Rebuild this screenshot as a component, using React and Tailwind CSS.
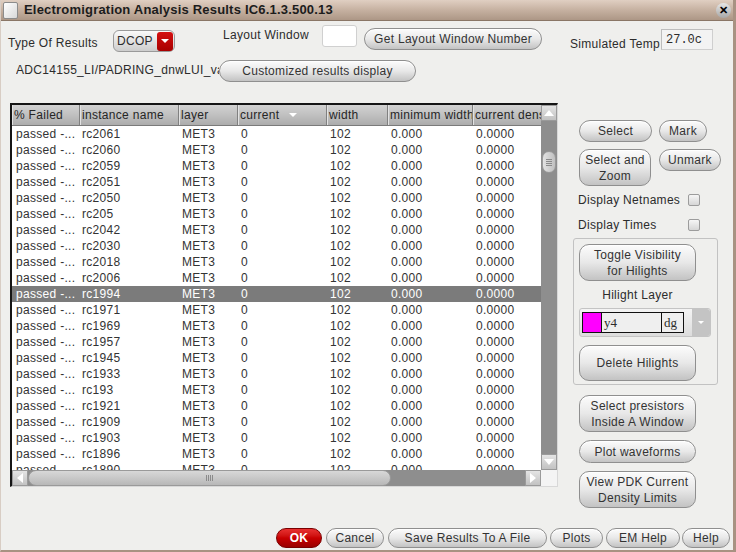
import React from 'react'

const rows = [
  'rc2061', 'rc2060', 'rc2059', 'rc2051', 'rc2050', 'rc205', 'rc2042', 'rc2030', 'rc2018', 'rc2006', 'rc1994',
  'rc1971', 'rc1969', 'rc1957', 'rc1945', 'rc1933', 'rc193', 'rc1921', 'rc1909', 'rc1903', 'rc1896', 'rc1890',
]

const headCell = 'flex h-full items-center overflow-hidden whitespace-nowrap border-r border-r-[#808080] shadow-[inset_1px_0_0_#e2e2e2] pl-[2px]'

function Pill({ className = '', children }) {
  return (
    <div
      className={`flex shrink-0 items-center justify-center border border-[#8f8f8f] bg-linear-to-b from-[#fcfcfc] via-[#e8e8e8] to-[#c3c3c3] text-center leading-[16px] text-[#333] shadow-[inset_0_1px_0_#ffffff] ${className}`}
    >
      {children}
    </div>
  )
}

function Check() {
  return <div className="h-[12px] w-[12px] rounded-[2px] border border-[#9c9c9c] bg-linear-to-b from-[#f6f6f6] to-[#d6d6d6]" />
}

function Arrow({ dir }) {
  const tri =
    dir === 'up'
      ? 'border-x-[5px] border-b-[6px] border-x-transparent border-b-white'
      : dir === 'down'
        ? 'border-x-[5px] border-t-[6px] border-x-transparent border-t-white'
        : dir === 'left'
          ? 'border-y-[5px] border-r-[6px] border-y-transparent border-r-white'
          : 'border-y-[5px] border-l-[6px] border-y-transparent border-l-white'
  return (
    <div className="flex h-[16px] w-[16px] shrink-0 items-center justify-center border border-[#9a9a9a] bg-linear-to-b from-[#e4e4e4] to-[#c2c2c2]">
      <div className={`h-0 w-0 ${tri}`} />
    </div>
  )
}

export default function App() {
  return (
    <div className="flex h-[552px] w-[736px] flex-col overflow-hidden border-b-2 border-l border-r-[3px] border-b-[#a89282] border-l-[#d8cdc4] border-r-[#a89282] bg-[#efefed] font-['Liberation_Sans',Arial,sans-serif] text-[12px] tracking-[0.3px] text-[#2c2c2c]">
      {/* title bar */}
      <div className="flex h-[21px] shrink-0 items-center border-b border-[#8a7666] bg-linear-to-b from-[#e0cfc2] via-[#c6b1a1] to-[#ad9786]">
        <div className="ml-[2px] h-[17px] w-[15px] rounded-[2px] border border-[#8c8c8c] bg-linear-to-br from-white to-[#d8d8d8]" />
        <div className="ml-[6px] text-[13px] font-bold tracking-[0.2px] text-[#1c1c1c]">Electromigration Analysis Results IC6.1.3.500.13</div>
        <div className="ml-auto mr-[2px] flex h-[15px] w-[15px] items-center justify-center rounded-full bg-linear-to-b from-[#e6e6e6] to-[#a8a8a8] text-[11px] font-bold leading-none text-black">
          ✕
        </div>
      </div>

      <div className="flex flex-1 flex-col">
        {/* row 1 */}
        <div className="flex h-[36px] shrink-0 items-start">
          <div className="ml-[7px] mt-[14px] w-[105px] leading-[16px]">Type Of Results</div>
          <div className="mt-[9px] flex h-[22px] w-[62px] items-center rounded-[6px] border border-[#9a9a9a] bg-linear-to-b from-[#fafafa] to-[#cdcdcd] pl-[3px]">
            <span className="flex-1">DCOP</span>
            <div className="mr-[1px] flex h-[19px] w-[16px] items-center justify-center rounded-[3px] bg-linear-to-b from-[#d41010] to-[#a80000]">
              <div className="h-0 w-0 border-x-[4px] border-t-[4px] border-x-transparent border-t-white" />
            </div>
          </div>
          <div className="ml-[48px] mt-[6px] w-[99px] leading-[16px]">Layout Window</div>
          <div className="mt-[4px] h-[22px] w-[35px] rounded-[3px] border border-[#d0d0d0] bg-white" />
          <Pill className="ml-[7px] mt-[7px] h-[22px] w-[178px] rounded-full">Get Layout Window Number</Pill>
          <div className="ml-[28px] mt-[15px] w-[91px] leading-[16px]">Simulated Temp</div>
          <div className="mt-[8px] flex h-[21px] w-[52px] items-center border border-[#cfcfcf] border-l-[#bdbdbd] border-t-[#bdbdbd] bg-[#f3f3f3] pl-[4px] font-['Liberation_Mono',monospace] text-[12px] tracking-normal">
            27.0c
          </div>
        </div>

        {/* row 2 */}
        <div className="flex h-[28px] shrink-0 items-start">
          <div className="ml-[15px] mt-[5px] w-[203px] overflow-hidden whitespace-nowrap leading-[16px]">ADC14155_LI/PADRING_dnwLUI_va</div>
          <Pill className="mt-[3px] h-[22px] w-[197px] rounded-full">Customized results display</Pill>
        </div>

        {/* main */}
        <div className="mt-[18px] flex shrink-0 items-start">
          {/* table */}
          <div className="ml-[9px] flex h-[384px] w-[548px] flex-col border-b border-l-2 border-r border-t-2 border-b-[#d8d8d8] border-l-[#151515] border-r-[#d8d8d8] border-t-[#151515] bg-white">
            <div className="flex h-[365px]">
              <div className="flex w-[529px] flex-col">
                <div className="flex h-[21px] shrink-0 border-b border-[#7a7a7a] bg-linear-to-b from-[#d2d2d2] via-[#c0c0c0] to-[#acacac] text-[#262626]">
                  <div className={`${headCell} w-[68px]`}>% Failed</div>
                  <div className={`${headCell} w-[99px]`}>instance name</div>
                  <div className={`${headCell} w-[59px]`}>layer</div>
                  <div className={`${headCell} w-[89px]`}>
                    current
                    <div className="ml-[10px] h-0 w-0 border-x-[4px] border-t-[4px] border-x-transparent border-t-white" />
                  </div>
                  <div className={`${headCell} w-[61px]`}>width</div>
                  <div className={`${headCell} w-[85px]`}>minimum width</div>
                  <div className={`${headCell} w-[68px] border-r-0`}>current density</div>
                </div>
                <div className="flex-1 overflow-hidden">
                  {rows.map((r) => {
                    const sel = r === 'rc1994'
                    return (
                      <div
                        key={r}
                        className={`flex h-[16px] items-center whitespace-nowrap leading-[16px] ${sel ? 'bg-[#7b7b7b] text-white' : 'text-[#333]'}`}
                      >
                        <div className="w-[68px] pl-[4px]">passed -...</div>
                        <div className="w-[99px] pl-[2px]">{r}</div>
                        <div className="w-[59px] pl-[3px]">MET3</div>
                        <div className="w-[89px] pl-[3px]">0</div>
                        <div className="w-[61px] pl-[3px]">102</div>
                        <div className="w-[85px] pl-[3px]">0.000</div>
                        <div className="w-[68px] pl-[3px]">0.0000</div>
                      </div>
                    )
                  })}
                </div>
              </div>
              {/* vertical scrollbar */}
              <div className="flex w-[16px] flex-col bg-[#8e8e8e]">
                <Arrow dir="up" />
                <div className="flex-1">
                  <div className="mx-auto mt-[30px] flex h-[22px] w-[14px] flex-col items-center justify-center gap-[1px] rounded-full border border-[#9a9a9a] bg-linear-to-r from-[#e2e2e2] to-[#c0c0c0]">
                    <div className="h-px w-[6px] bg-[#8a8a8a]" />
                    <div className="h-px w-[6px] bg-[#8a8a8a]" />
                    <div className="h-px w-[6px] bg-[#8a8a8a]" />
                    <div className="h-px w-[6px] bg-[#8a8a8a]" />
                  </div>
                </div>
                <Arrow dir="down" />
              </div>
            </div>
            {/* horizontal scrollbar */}
            <div className="flex h-[16px]">
              <div className="flex w-[529px] bg-[#8e8e8e]">
                <Arrow dir="left" />
                <div className="flex h-[16px] w-[363px] items-center justify-center gap-[1px] rounded-full border border-[#9a9a9a] bg-linear-to-b from-[#d8d8d8] to-[#b8b8b8]">
                  <div className="h-[6px] w-px bg-[#8a8a8a]" />
                  <div className="h-[6px] w-px bg-[#8a8a8a]" />
                  <div className="h-[6px] w-px bg-[#8a8a8a]" />
                  <div className="h-[6px] w-px bg-[#8a8a8a]" />
                </div>
                <div className="flex-1" />
                <Arrow dir="right" />
              </div>
              <div className="w-[16px] bg-[#f4f4f4]" />
            </div>
          </div>

          {/* right panel */}
          <div className="ml-[15px] flex w-[146px] flex-col pt-[17px]">
            <div className="flex">
              <Pill className="ml-[6px] h-[22px] w-[73px] rounded-full">Select</Pill>
              <Pill className="ml-[7px] h-[22px] w-[48px] rounded-full">Mark</Pill>
            </div>
            <div className="mt-[7px] flex items-start">
              <Pill className="ml-[6px] h-[37px] w-[72px] rounded-[10px]">
                Select and
                <br />
                Zoom
              </Pill>
              <Pill className="ml-[8px] h-[22px] w-[62px] rounded-full">Unmark</Pill>
            </div>
            <div className="mt-[6px] flex h-[16px] items-center pl-[5px]">
              <span className="w-[110px]">Display Netnames</span>
              <Check />
            </div>
            <div className="mt-[9px] flex h-[16px] items-center pl-[5px]">
              <span className="w-[110px]">Display Times</span>
              <Check />
            </div>
            <div className="mt-[5px] flex h-[147px] w-[145px] flex-col rounded-[3px] border border-[#c2c2c2] pl-[5px] pt-[5px]">
              <Pill className="h-[37px] w-[117px] rounded-[10px]">
                Toggle Visibility
                <br />
                for Hilights
              </Pill>
              <div className="mt-[6px] w-[117px] text-center leading-[16px]">Hilight Layer</div>
              <div className="mt-[5px] flex h-[29px] w-[132px] items-center rounded-[3px] border border-[#c4c4c4] bg-linear-to-b from-[#f4f4f4] to-[#dcdcdc] pl-[2px]">
                <div className="flex h-[21px] w-[102px] border border-[#111] bg-[#efefef]">
                  <div className="w-[19px] border-r border-[#111] bg-[#ff00ff]" />
                  <div className="w-[60px] border-r border-[#111] pl-[2px] font-['Liberation_Serif',serif] text-[13px] leading-[19px] tracking-normal">y4</div>
                  <div className="pl-[2px] font-['Liberation_Serif',serif] text-[13px] leading-[19px] tracking-normal">dg</div>
                </div>
                <div className="ml-auto flex h-[27px] w-[18px] items-center justify-center rounded-r-[3px] bg-[#c4c4c4]">
                  <div className="h-0 w-0 border-x-[3px] border-t-[3px] border-x-transparent border-t-white" />
                </div>
              </div>
              <Pill className="mt-[8px] h-[36px] w-[117px] rounded-[10px]">Delete Hilights</Pill>
            </div>
            <Pill className="ml-[6px] mt-[10px] h-[37px] w-[117px] rounded-[10px]">
              Select presistors
              <br />
              Inside A Window
            </Pill>
            <Pill className="ml-[6px] mt-[8px] h-[23px] w-[117px] rounded-full">Plot waveforms</Pill>
            <Pill className="ml-[6px] mt-[8px] h-[37px] w-[117px] rounded-[10px]">
              View PDK Current
              <br />
              Density Limits
            </Pill>
          </div>
        </div>

        <div className="flex-1" />

        {/* bottom buttons */}
        <div className="mb-[2px] flex h-[20px] shrink-0 items-center">
          <div className="ml-[275px] flex h-[20px] w-[46px] items-center justify-center rounded-full border border-[#7a0000] bg-linear-to-b from-[#e83030] via-[#c80000] to-[#9a0000] font-bold text-white">
            OK
          </div>
          <Pill className="ml-[4px] h-[20px] w-[58px] rounded-full">Cancel</Pill>
          <Pill className="ml-[4px] h-[20px] w-[159px] rounded-full">Save Results To A File</Pill>
          <Pill className="ml-[3px] h-[20px] w-[53px] rounded-full">Plots</Pill>
          <Pill className="ml-[3px] h-[20px] w-[74px] rounded-full">EM Help</Pill>
          <Pill className="ml-[2px] h-[20px] w-[48px] rounded-full">Help</Pill>
        </div>
      </div>
    </div>
  )
}
